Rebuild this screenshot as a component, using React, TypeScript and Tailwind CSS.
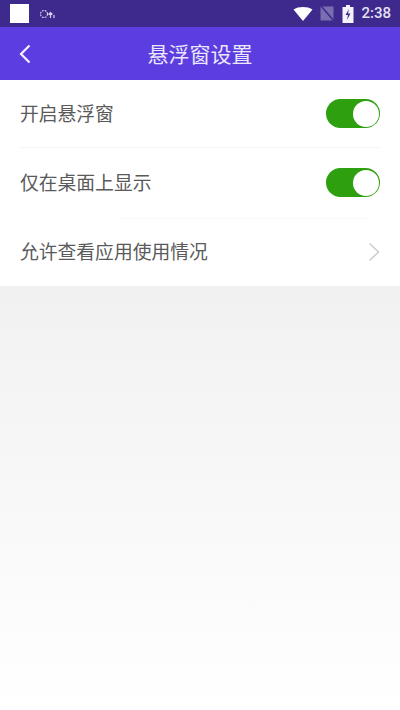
import React from 'react';

const Toggle: React.FC = () => (
  <div className="w-[54px] h-[29px] rounded-full bg-[#2ea00f] flex items-center justify-end pr-[1.500px]">
    <div className="w-[26px] h-[26px] rounded-full bg-white" />
  </div>
);

const StatusBar: React.FC = () => (
  <div className="h-[27px] shrink-0 bg-[#3d2a8c] flex items-center pl-[10px] pr-[9px]">
    <div className="w-[19px] h-[19px] bg-white" />
    {/* 알림 아이콘 */}
    <svg width="16" height="12" viewBox="0 0 16 12" className="ml-[10px]" fill="none" stroke="#d8d2ef" strokeWidth="1.200">
      <circle cx="5" cy="6" r="3.500" strokeDasharray="1.800 1" />
      <path d="M11.500 10V4.500M9.500 6.500 11.500 4.500l2 2M15 10V7" />
    </svg>
    <div className="flex-1" />
    <svg width="20" height="14" viewBox="0 0 20 14">
      <path d="M0.500 2.500C3 0.800 6.300 0 10 0s7 .8 9.500 2.500L10 14z" fill="#ffffff" />
    </svg>
    <svg width="14" height="15" viewBox="0 0 14 15" className="ml-[7px]">
      <path d="M0.500 0.500H13.500V14.500H0.500z" fill="#7a6db0" />
      <path d="M1 0 14 15" stroke="#3d2a8c" strokeWidth="1.500" />
    </svg>
    <svg width="12" height="18" viewBox="0 0 12 18" className="ml-[8px]">
      <path d="M4 0h4v2h3.500v16H0.500V2H4z" fill="#f4f2fb" />
      <path d="M7 4 3.500 10H6L5 15l3.500-6.500H6z" fill="#3d2a8c" />
    </svg>
    <span className="ml-[7px] text-[15px] font-medium text-[#e4e0f3] font-['Roboto',sans-serif]">2:38</span>
  </div>
);

const Header: React.FC = () => (
  <header className="h-[53px] shrink-0 bg-[#5c3ddf] relative flex items-center justify-center">
    <svg width="12" height="20" viewBox="0 0 12 20" fill="none" stroke="#f4f2fd" strokeWidth="2.200" className="absolute left-[19px] top-[17px]">
      <path d="M10.500 1.500 2 10l8.500 8.500" />
    </svg>
    <h1 className="text-[21px] text-[#ebe7fb] font-normal">悬浮窗设置</h1>
  </header>
);

export default function App() {
  return (
    <div className="w-[400px] h-[710px] flex flex-col overflow-hidden font-['Noto_Sans_CJK_SC',sans-serif]">
      <StatusBar />
      <Header />

      <div className="bg-white shrink-0 px-5">
        <div className="h-[68px] flex items-center justify-between border-b border-[#f6f6f6]">
          <span className="text-[18.800px] text-[#5a5a5a]">开启悬浮窗</span>
          <Toggle />
        </div>
        <div className="h-[69px] flex items-center justify-between">
          <span className="text-[18.800px] text-[#5a5a5a]">仅在桌面上显示</span>
          <Toggle />
        </div>
        <div className="h-px mt-px ml-[100px] mr-[10px] bg-[#f8f8f8]" />
        <div className="h-[67px] pb-[2px] flex items-center justify-between">
          <span className="text-[18.800px] text-[#5a5a5a]">允许查看应用使用情况</span>
          <svg width="12" height="20" viewBox="0 0 12 20" fill="none" stroke="#cfcfcf" strokeWidth="1.600">
            <path d="M1.500 1.500 10.500 10l-9 8.500" />
          </svg>
        </div>
      </div>

      <div className="flex-1 bg-gradient-to-b from-[#f1f1f1] to-[#ffffff]" />
    </div>
  );
}
